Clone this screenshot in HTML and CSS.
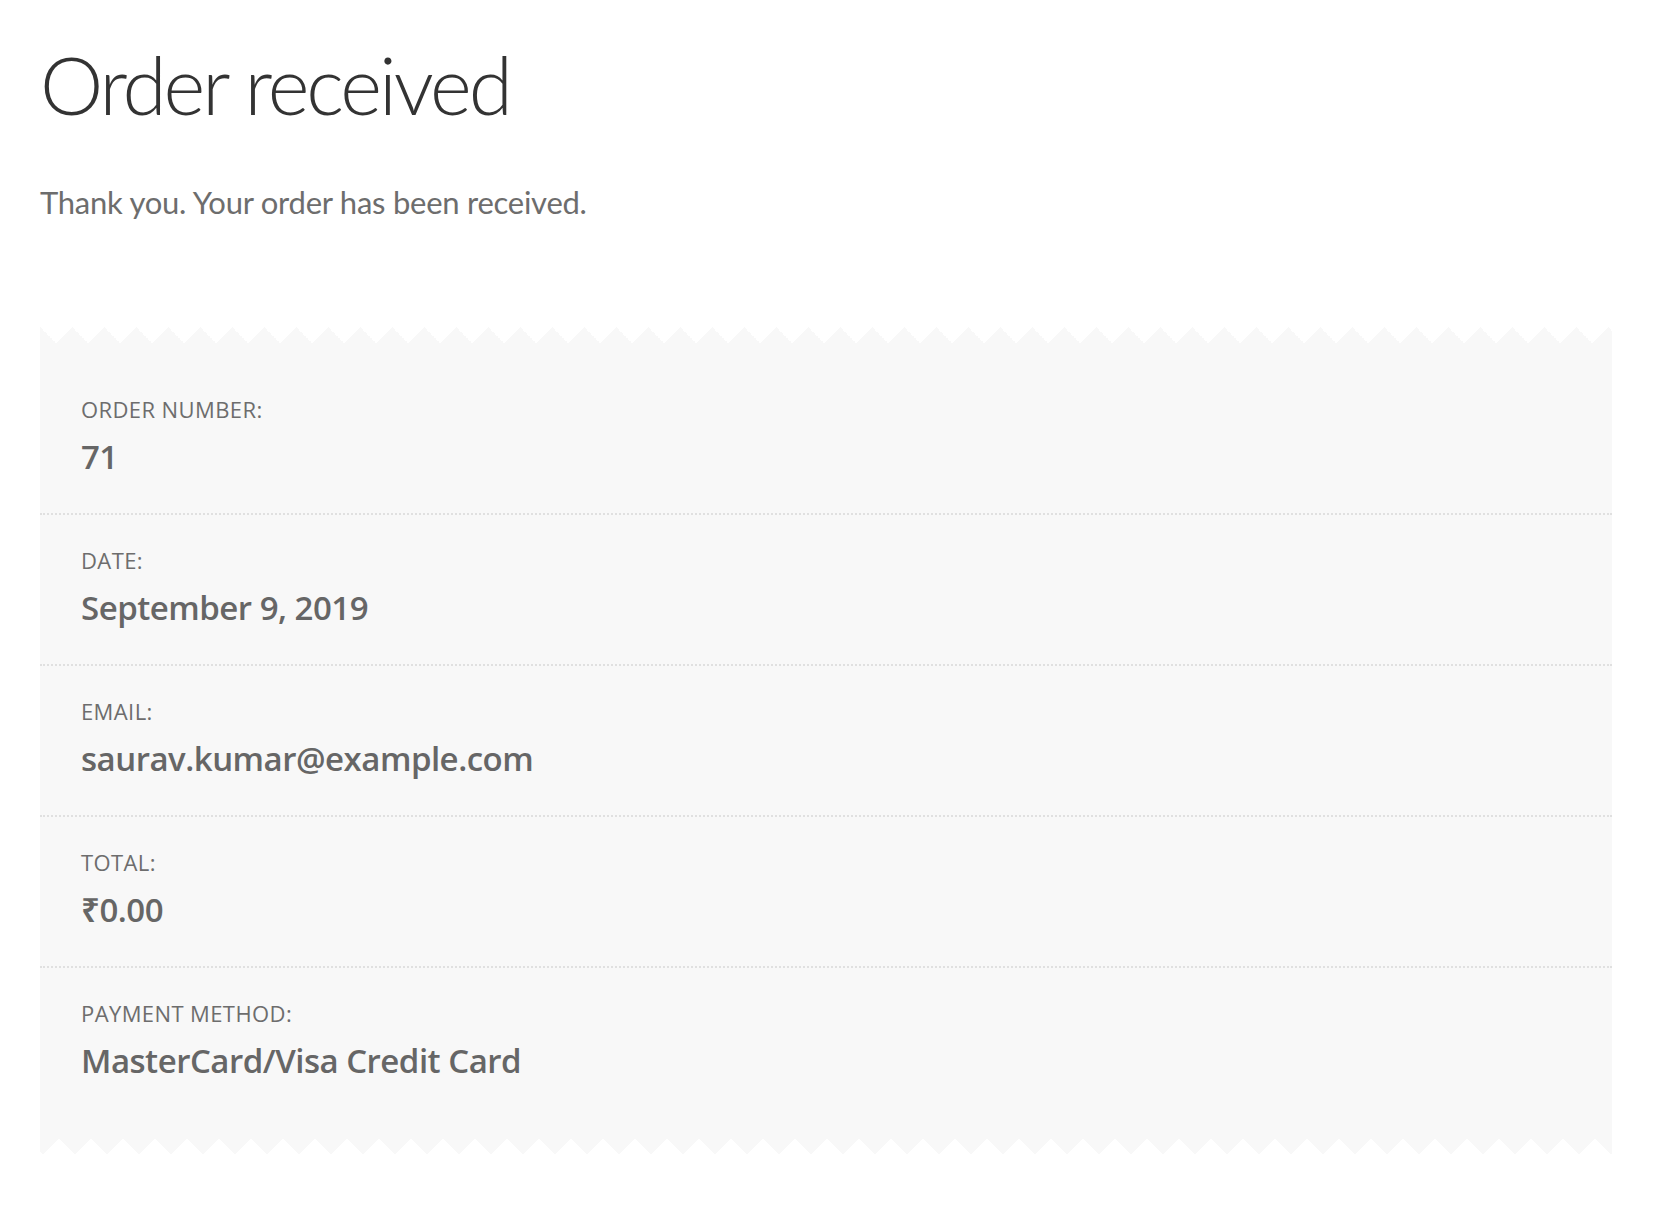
FILE: index.html
```html
<!DOCTYPE html>
<html>
 <head>
  <meta charset="utf-8">
  <title>Order received</title>
  <link rel="stylesheet" href="styles.css">
 </head>
 <body>
  <div class="page">
   <h1 class="entry_title">Order received</h1>
   <p class="thankyou">Thank you. Your order has been received.</p>

   <ul class="order_details">
    <li class="order">
     <span class="label">Order number:</span>
     <strong>71</strong>
    </li>
    <li class="date">
     <span class="label">Date:</span>
     <strong>September 9, 2019</strong>
    </li>
    <li class="email">
     <span class="label">Email:</span>
     <strong>saurav.kumar@example.com</strong>
    </li>
    <li class="total">
     <span class="label">Total:</span>
     <strong>&#8377;0.00</strong>
    </li>
    <li class="method">
     <span class="label">Payment method:</span>
     <strong>MasterCard/Visa Credit Card</strong>
    </li>
   </ul>
  </div>
 </body>
</html>
```

FILE: styles.css
```css
body {
  margin:0;
  background-color:#ffffff;
  color:#6d6d6d;
  font-family:"Open Sans", "Noto Sans", sans-serif;
}

.page {
  width:1572px;
  padding:0 0 60px 40px;
}

.entry_title {
  margin:36px 0 0;
  font-family:Lato, "Open Sans", sans-serif;
  font-size:80px;
  line-height:96px;
  font-weight:300;
  letter-spacing:-3px;
  color:#333333;
}

.thankyou {
  margin:45px 0 0;
  font-family:Lato, "Open Sans", sans-serif;
  font-size:31px;
  line-height:50px;
  letter-spacing:-0.25px;
}

/* box with torn paper edges */
.order_details {
  position:relative;
  list-style:none;
  margin:116px 0 0;
  padding:21px 0 21px;
  background-color:#f8f8f8;
}

.order_details::before,
.order_details::after {
  content:"";
  position:absolute;
  left:0;
  width:100%;
  height:16px;
  background-size:32px 16px;
  background-repeat:repeat-x;
}

.order_details::before {
  top:-16px;
  background-image:conic-gradient(from 135deg at 50% 0, #f8f8f8 90deg, transparent 0);
  background-position:-16px 0;
}

.order_details::after {
  bottom:-16px;
  background-image:conic-gradient(from -45deg at 50% 100%, #f8f8f8 90deg, transparent 0);
  background-position:-13px 0;
}

.order_details li {
  padding:30px 41px 34px;
  border-bottom:2px dotted #e0e0e0;
}

.order_details li:last-child {
  border-bottom:none;
}

.label {
  display:block;
  font-size:22px;
  line-height:30px;
  letter-spacing:0.4px;
  text-transform:uppercase;
}

.order_details strong {
  display:block;
  margin-top:11px;
  font-size:33px;
  line-height:44px;
  font-weight:600;
  letter-spacing:-0.5px;
  color:#666666;
}
```
